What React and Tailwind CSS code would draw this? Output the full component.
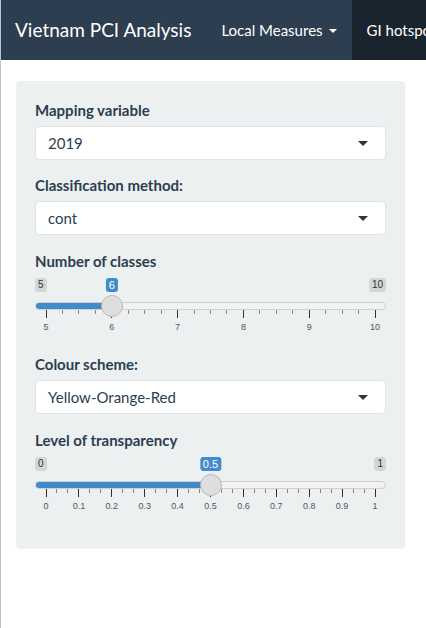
import React from "react";

const TRACK_W = 351;
const HANDLE = 22;
const pos = (f) => HANDLE / 2 + f * (TRACK_W - HANDLE);

function Slider({ min, max, value, majors, minor, fmt }) {
  const f = (value - min) / (max - min);
  const n = majors.length - 1;
  const ticks = [];
  for (let i = 0; i <= n; i++) {
    ticks.push({ f: i / n, big: true });
    if (i < n) {
      for (let k = 1; k <= minor; k++) {
        ticks.push({ f: (i + k / (minor + 1)) / n, big: false });
      }
    }
  }
  return (
    <div className="relative h-[62px] w-full font-['Liberation_Sans',Arial,sans-serif]">
      <div className="flex items-start justify-between pt-[1px]">
        <span className="rounded-[3px] bg-black/10 px-[3px] py-[1px] text-[10px] leading-[12px] text-[#333]">
          {fmt(min)}
        </span>
        <span className="rounded-[3px] bg-black/10 px-[3px] py-[1px] text-[10px] leading-[12px] text-[#333]">
          {fmt(max)}
        </span>
      </div>
      <div className="mt-[10px] h-[8px] w-full overflow-hidden rounded-full border border-[#d0d0d0] bg-[#f2f2f2]">
        <div className="h-full bg-[#428bca]" style={{ width: pos(f) }} />
      </div>
      {ticks.map((t, i) => (
        <div
          key={i}
          className={
            t.big
              ? "absolute top-[33px] h-[8px] w-px bg-[#333]"
              : "absolute top-[33px] h-[4px] w-px bg-[#888]"
          }
          style={{ left: pos(t.f) - 0.5 }}
        />
      ))}
      {majors.map((m, i) => (
        <span
          key={i}
          className="absolute top-[45px] -translate-x-1/2 text-[9px] leading-[11px] text-[#555]"
          style={{ left: pos(i / n) }}
        >
          {m}
        </span>
      ))}
      <div
        className="absolute top-[18px] h-[22px] w-[22px] rounded-full border border-[#b9b9b9] bg-[#dedede]"
        style={{ left: pos(f) - HANDLE / 2 }}
      />
      <span
        className="absolute top-[1px] -translate-x-1/2 rounded-[3px] bg-[#428bca] px-[3px] py-[1px] text-[11px] leading-[12px] text-white"
        style={{ left: pos(f) }}
      >
        {fmt(value)}
      </span>
    </div>
  );
}

function Select({ value }) {
  return (
    <div className="flex h-[34px] items-center justify-between rounded-[4px] border border-[#dde3e7] bg-white pl-[12px] pr-[17px] text-[15px] text-[#2c3e50]">
      <span>{value}</span>
      <span className="h-0 w-0 border-x-[5px] border-t-[5px] border-x-transparent border-t-[#333]" />
    </div>
  );
}

function Label({ children }) {
  return (
    <div className="mb-[5px] text-[15px] font-bold leading-[21px] text-[#2c3e50]">
      {children}
    </div>
  );
}

export default function App() {
  return (
    <div className="h-[628px] w-[426px] overflow-hidden border-l border-[#b3c4d4] bg-white font-['Lato','Noto_Sans',sans-serif]">
      <nav className="flex h-[60px] items-stretch overflow-hidden whitespace-nowrap bg-[#2c3e50] text-white">
        <div className="flex shrink-0 items-center pl-[14px] pr-[15px] text-[19px]">
          Vietnam PCI Analysis
        </div>
        <div className="flex shrink-0 items-center px-[15px] text-[15px]">
          Local Measures
          <span className="ml-[6px] mt-[1px] h-0 w-0 border-x-[4px] border-t-[4px] border-x-transparent border-t-white" />
        </div>
        <div className="flex shrink-0 items-center bg-[#1a242f] px-[15px] text-[15px]">
          GI hotspot
        </div>
      </nav>
      <div className="px-[15px] pt-[21px]">
        <div className="w-[389px] rounded-[4px] bg-[#ecf0f1] p-[19px] pb-[15px] shadow-[0_1px_1px_rgba(0,0,0,0.06)]">
          <div className="mb-[15px]">
            <Label>Mapping variable</Label>
            <Select value="2019" />
          </div>
          <div className="mb-[16px]">
            <Label>Classification method:</Label>
            <Select value="cont" />
          </div>
          <div className="mb-[15px]">
            <Label>Number of classes</Label>
            <Slider
              min={5}
              max={10}
              value={6}
              majors={["5", "6", "7", "8", "9", "10"]}
              minor={3}
              fmt={(v) => String(v)}
            />
          </div>
          <div className="mb-[16px]">
            <Label>Colour scheme:</Label>
            <Select value="Yellow-Orange-Red" />
          </div>
          <div className="mb-[15px]">
            <Label>Level of transparency</Label>
            <Slider
              min={0}
              max={1}
              value={0.5}
              majors={["0", "0.1", "0.2", "0.3", "0.4", "0.5", "0.6", "0.7", "0.8", "0.9", "1"]}
              minor={2}
              fmt={(v) => String(v)}
            />
          </div>
        </div>
      </div>
    </div>
  );
}
